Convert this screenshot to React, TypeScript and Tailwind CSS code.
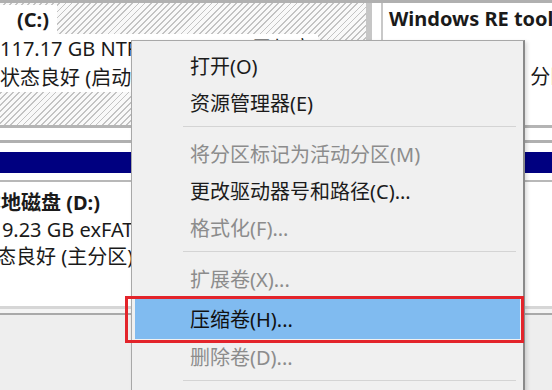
const font = "font-['Noto_Sans','Noto_Sans_CJK_SC',sans-serif]";

type Item = { label: string; on: boolean; hl?: boolean } | 'sep';

const items: Item[] = [
  { label: '打开(O)', on: true },
  { label: '资源管理器(E)', on: true },
  'sep',
  { label: '将分区标记为活动分区(M)', on: false },
  { label: '更改驱动器号和路径(C)...', on: true },
  { label: '格式化(F)...', on: false },
  'sep',
  { label: '扩展卷(X)...', on: false },
  { label: '压缩卷(H)...', on: true, hl: true },
  { label: '删除卷(D)...', on: false },
  'sep',
];

function ContextMenu() {
  return (
    <div className="absolute left-[131px] top-[40px] w-[394px] h-[360px] bg-[#f0f0f0] border border-[#a8a8a8] border-r-2 border-r-[#8a8a8a] shadow-[2px_2px_4px_rgba(0,0,0,0.15)] pt-[7px]">
      {items.map((item, i) => {
        if (item === 'sep') {
          return (
            <div key={i} className="h-[14px] pt-[4px] pl-[51px] pr-[7px]">
              <div className="h-px bg-[#d4d4d4]"></div>
            </div>
          );
        }
        if (item.hl) {
          return (
            <div key={i} className="relative mx-[3px] h-[41px] pl-[55px] flex items-center bg-[#80bbf0] text-[#111]">
              <span className="pt-[3px]">{item.label}</span>
              <div className="absolute -left-[10px] -right-[4px] -top-[2px] -bottom-[4px] border-[3px] border-[#e3242b]"></div>
            </div>
          );
        }
        return (
          <div
            key={i}
            className={`h-[37px] pl-[58px] flex items-center ${item.on ? 'text-[#1b1b1b]' : 'text-[#8c8c8c]'}`}
          >
            {item.label}
          </div>
        );
      })}
    </div>
  );
}

export default function App() {
  return (
    <div className={`relative w-[552px] h-[390px] overflow-hidden bg-white text-[20px] text-[#1a1a1a] ${font}`}>
      {/* top row: C: and Windows RE partitions */}
      <div className="flex h-[125px] border-t-[3px] border-[#b0b0b0]">
        <div className="w-[366px] shrink-0 pt-[2px] leading-[29px] whitespace-nowrap overflow-hidden bg-[repeating-linear-gradient(135deg,#f9f9f9_0px,#f9f9f9_3px,#c3c3c3_3px,#c3c3c3_4.3px)]">
          <div>
            <span className="inline-block bg-white pl-[17px] pr-[8px] font-bold">(C:)</span>
          </div>
          <div>
            <span className="inline-block bg-white">117.17 GB NTFS (BitLocker 已加密)</span>
          </div>
          <div>
            <span className="inline-block bg-white">状态良好 (启动, 页面文件, 故障转储, 基本数据分区)</span>
          </div>
        </div>
        <div className="w-[6px] shrink-0 bg-[#c6c6c6]"></div>
        <div className="flex-1 min-w-0 pl-[9px] bg-white">
          <div className="h-full border-l-2 border-[#c8c8c8] pl-[6px] pt-[1px] leading-[29px] whitespace-nowrap overflow-hidden">
            <div className="font-bold">Windows RE tools</div>
            <div>1.00 GB NTFS</div>
            <div>状态良好 (OEM 分区)</div>
          </div>
        </div>
      </div>

      {/* band with navy bar */}
      <div className="h-[3px] bg-[#b4b4b4]"></div>
      <div className="h-[12px] bg-white"></div>
      <div className="h-[3px] bg-[#b0b0b0]"></div>
      <div className="h-[9px] bg-white"></div>
      <div className="h-[21px] bg-[#000080]"></div>
      <div className="h-[7px] bg-white"></div>
      <div className="h-[2px] bg-[#b8b8b8]"></div>

      {/* D: partition */}
      <div className="h-[124px] bg-white pt-[7px] leading-[27px] whitespace-nowrap overflow-hidden">
        <div className="-ml-[19px] font-bold">本地磁盘 (D:)</div>
        <div className="-ml-[21px]">119.23 GB exFAT</div>
        <div className="-ml-[24px]">状态良好 (主分区)</div>
      </div>

      <div className="h-[3px] bg-[#d6d6d6]"></div>
      <div className="h-[4px] bg-[#f4f4f4]"></div>
      <div className="h-[2px] bg-[#a9a9a9]"></div>
      <div className="h-[80px] bg-[#eeeeee]"></div>

      <ContextMenu />
    </div>
  );
}
